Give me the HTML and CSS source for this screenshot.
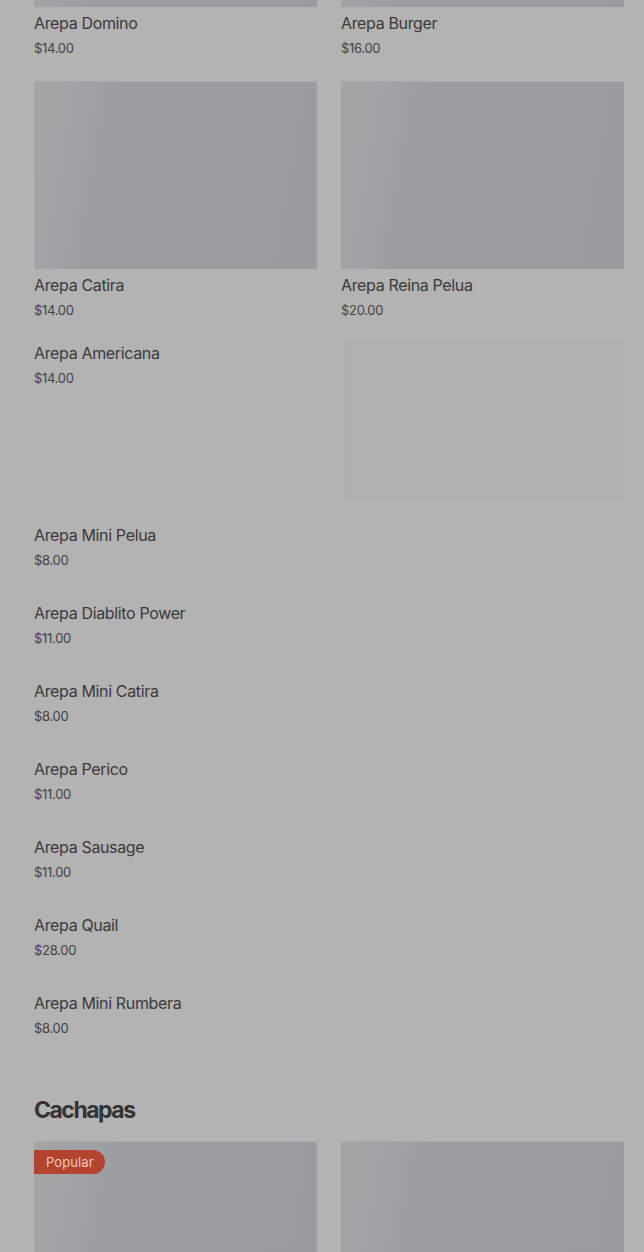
FILE: index.html
```html
<!DOCTYPE html>
<html>
<head>
    <title>Menu</title>
    <link rel="stylesheet" href="styles.css">
</head>
<body>
    <div class="menu">
        <div class="grid">
            <div class="card">
                <div class="photo"></div>
                <div class="name">Arepa Domino</div>
                <div class="price">$14.00</div>
            </div>
            <div class="card">
                <div class="photo"></div>
                <div class="name">Arepa Burger</div>
                <div class="price">$16.00</div>
            </div>
            <div class="card">
                <div class="photo"></div>
                <div class="name">Arepa Catira</div>
                <div class="price">$14.00</div>
            </div>
            <div class="card">
                <div class="photo"></div>
                <div class="name">Arepa Reina Pelua</div>
                <div class="price">$20.00</div>
            </div>
        </div>

        <div class="list">
            <div class="item with-photo">
                <div class="info">
                    <div class="name">Arepa Americana</div>
                    <div class="price">$14.00</div>
                </div>
                <div class="thumb"></div>
            </div>
            <div class="item">
                <div class="name">Arepa Mini Pelua</div>
                <div class="price">$8.00</div>
            </div>
            <div class="item">
                <div class="name">Arepa Diablito Power</div>
                <div class="price">$11.00</div>
            </div>
            <div class="item">
                <div class="name">Arepa Mini Catira</div>
                <div class="price">$8.00</div>
            </div>
            <div class="item">
                <div class="name">Arepa Perico</div>
                <div class="price">$11.00</div>
            </div>
            <div class="item">
                <div class="name">Arepa Sausage</div>
                <div class="price">$11.00</div>
            </div>
            <div class="item">
                <div class="name">Arepa Quail</div>
                <div class="price">$28.00</div>
            </div>
            <div class="item">
                <div class="name">Arepa Mini Rumbera</div>
                <div class="price">$8.00</div>
            </div>
        </div>

        <h2 class="section-title">Cachapas</h2>

        <div class="grid">
            <div class="card">
                <div class="photo tall">
                    <span class="badge">Popular</span>
                </div>
            </div>
            <div class="card">
                <div class="photo tall"></div>
            </div>
        </div>
    </div>
</body>
</html>
```

FILE: styles.css
```css
body {
    margin: 0;
    background-color: #b3b3b3; /* page under the dark backdrop */
    font-family: Inter, "Noto Sans", sans-serif;
    color: #383838;
    overflow: hidden;
}
.menu {
    padding: 0 20px 0 34px;
    margin-top: -181px; /* scrolled part way down */
}
.grid {
    display: grid;
    grid-template-columns: 1fr 1fr;
    gap: 24px;
}
.photo {
    position: relative;
    height: 187px;
    background: linear-gradient(100deg, #a5a5a5 0%, #a2a3a5 14%, #9b9da2 28%, #9a9ca2 100%);
    border-top: 1px solid #a7a9ae;
}
.photo.tall {
    height: 200px;
}
.name {
    font-size: 16px;
    line-height: 20px;
    color: #3a3a3a;
    letter-spacing: -0.35px;
}
.price {
    font-size: 13px;
    line-height: 18px;
    color: #444;
    margin-top: 6px;
    letter-spacing: -0.3px;
}
.card .name {
    margin-top: 6px;
}
.list {
    margin-top: 7px;
}
.item {
    padding: 17px 0;
}
.item.with-photo {
    display: flex;
    justify-content: space-between;
    align-items: flex-start;
    padding: 14px 0 8px;
}
.item.with-photo .info {
    padding-top: 3px;
}
.thumb {
    width: 277px;
    height: 160px;
    background-color: #b1b1b1;
    border-left: 2px solid #afafaf;
}
.section-title {
    font-size: 23px;
    line-height: 30px;
    font-weight: 700;
    letter-spacing: -1.5px;
    color: #333;
    margin: 41px 0 16px;
}
.badge {
    position: absolute;
    top: 8px;
    left: 0;
    padding: 0 11px 0 12px;
    height: 24px;
    line-height: 24px;
    font-size: 13px;
    letter-spacing: 0.1px;
    color: #ecc8bf;
    background-color: #b4432f;
    border-radius: 0 12px 12px 0;
}
```
